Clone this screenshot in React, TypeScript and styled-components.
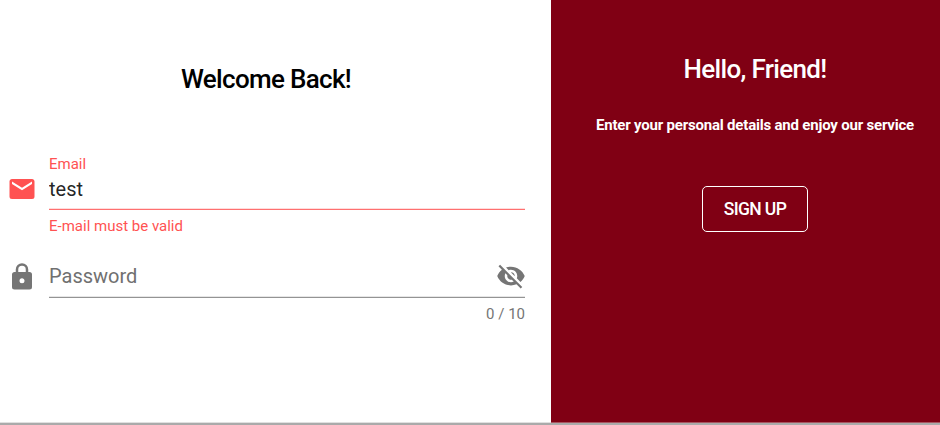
import React from "react";
import styled, { createGlobalStyle } from "styled-components";

const GlobalStyle = createGlobalStyle`
  body { margin: 0; background: #fff; overflow: hidden; font-family: Roboto, sans-serif; }
  * { box-sizing: border-box; }
`;

const Card = styled.main`
  display: grid;
  grid-template-columns: 551px 389px;
  grid-template-rows: 422px 3px;
  width: 940px;
  height: 425px;
`;

const SignIn = styled.section`
  padding: 59px 26px 0 7px;
  background: #fff;
`;

const Welcome = styled.aside`
  display: flex;
  flex-direction: column;
  align-items: center;
  padding: 49px 0 0 19px;
  background: #800014;
  color: #fff;
`;

const CardShadow = styled.div<{ $edge: string }>`
  border-top: 1px solid ${(p) => p.$edge};
  background: #aaa;
`;

const Title = styled.h2`
  margin: 0;
  font: 500 26px/40px Roboto, sans-serif;
  letter-spacing: -0.68px;
  text-align: center;
  white-space: nowrap;
`;

const Form = styled.form`
  margin-top: 55px;
`;

const Field = styled.div`
  display: grid;
  grid-template-columns: 30px 476px;
  column-gap: 12px;
  height: 87.5px;
`;

const Icon = styled.svg<{ $color: string }>`
  display: block;
  width: 30px;
  height: 30px;
  flex: none;
  fill: ${(p) => p.$color};
`;

const LeadingIcon = styled(Icon)`
  margin-top: 20px;
  margin-left: 0.4px;
`;

const Label = styled.label`
  display: block;
  height: 20px;
  font-size: 15px;
  line-height: 20px;
  color: #ff5252;
`;

const InputRow = styled.div<{ $invalid?: boolean }>`
  display: flex;
  align-items: center;
  justify-content: space-between;
  height: 36px;
  padding-bottom: 6px;
  border-bottom: 1px solid ${(p) => (p.$invalid ? "#ff7070" : "#949494")};
  box-shadow: inset 0 -1px ${(p) => (p.$invalid ? "#ffdcdc" : "#e6e6e6")};
`;

const Input = styled.input`
  flex: 1;
  min-width: 0;
  height: 30px;
  padding: 0;
  border: 0;
  outline: 0;
  background: transparent;
  font: 400 20px/30px Roboto, sans-serif;
  color: rgba(0, 0, 0, 0.87);
  &::placeholder { color: #707070; opacity: 1; }
`;

const Reveal = styled.button`
  margin: 0 -0.5px 0 0;
  padding: 0;
  border: 0;
  background: none;
`;

const Message = styled.div<{ $color: string; $end?: boolean }>`
  margin-top: 7px;
  font-size: 15px;
  line-height: 18px;
  color: ${(p) => p.$color};
  text-align: ${(p) => (p.$end ? "right" : "left")};
`;

const Intro = styled.p`
  margin: 26px 0 0;
  font-size: 15px;
  font-weight: 700;
  line-height: 20px;
  letter-spacing: -0.2px;
  white-space: nowrap;
`;

const SignUp = styled.button`
  width: 106px;
  height: 46px;
  margin-top: 51px;
  padding: 0;
  border: 1px solid #fff;
  border-radius: 5px;
  background: transparent;
  font: 500 17.5px/24px Roboto, sans-serif;
  letter-spacing: -0.65px;
  color: #fff;
`;

export default function App() {
  return (
    <>
      <GlobalStyle />
      <Card>
        <SignIn>
          <Title>Welcome Back!</Title>
          <Form>
            <Field>
              <LeadingIcon $color="#ff5252" viewBox="0 0 24 24">
                <path d="M20 8L12 13L4 8V6L12 11L20 6M20 4H4C2.89 4 2 4.89 2 6V18A2 2 0 0 0 4 20H20A2 2 0 0 0 22 18V6C22 4.89 21.1 4 20 4Z" />
              </LeadingIcon>
              <div>
                <Label htmlFor="email">Email</Label>
                <InputRow $invalid>
                  <Input id="email" defaultValue="test" spellCheck={false} />
                </InputRow>
                <Message $color="#ff5252">E-mail must be valid</Message>
              </div>
            </Field>
            <Field>
              <LeadingIcon $color="#757575" viewBox="0 0 24 24">
                <path d="M12 17A2 2 0 0 0 14 15C14 13.89 13.1 13 12 13A2 2 0 0 0 10 15A2 2 0 0 0 12 17M18 8A2 2 0 0 1 20 10V20A2 2 0 0 1 18 22H6A2 2 0 0 1 4 20V10C4 8.89 4.9 8 6 8H7V6A5 5 0 0 1 12 1A5 5 0 0 1 17 6V8H18M12 3A3 3 0 0 0 9 6V8H15V6A3 3 0 0 0 12 3Z" />
              </LeadingIcon>
              <div>
                <Label as="div" />
                <InputRow>
                  <Input type="password" placeholder="Password" />
                  <Reveal type="button">
                    <Icon $color="#757575" viewBox="0 0 24 24">
                      <path d="M12 7c2.76 0 5 2.24 5 5 0 .65-.13 1.26-.36 1.83l2.92 2.92c1.51-1.26 2.7-2.89 3.43-4.75-1.73-4.39-6-7.5-11-7.5-1.4 0-2.74.25-3.98.7l2.16 2.16C10.74 7.13 11.35 7 12 7zM2 4.27l2.28 2.28.46.46C3.08 8.3 1.78 10.02 1 12c1.73 4.39 6 7.5 11 7.5 1.55 0 3.03-.3 4.38-.84l.42.42L19.73 22 21 20.73 3.27 3 2 4.27zM7.53 9.8l1.55 1.55c-.05.21-.08.43-.08.65 0 1.66 1.34 3 3 3 .22 0 .44-.03.65-.08l1.55 1.55c-.67.33-1.41.53-2.2.53-2.76 0-5-2.24-5-5 0-.79.2-1.53.53-2.2zm4.31-.78l3.15 3.15.02-.16c0-1.66-1.34-3-3-3l-.17.01z" />
                    </Icon>
                  </Reveal>
                </InputRow>
                <Message $color="#757575" $end>0 / 10</Message>
              </div>
            </Field>
          </Form>
        </SignIn>
        <Welcome>
          <Title>Hello, Friend!</Title>
          <Intro>Enter your personal details and enjoy our service</Intro>
          <SignUp>SIGN UP</SignUp>
        </Welcome>
        <CardShadow $edge="#e0e0e0" />
        <CardShadow $edge="#a85560" />
      </Card>
    </>
  );
}
